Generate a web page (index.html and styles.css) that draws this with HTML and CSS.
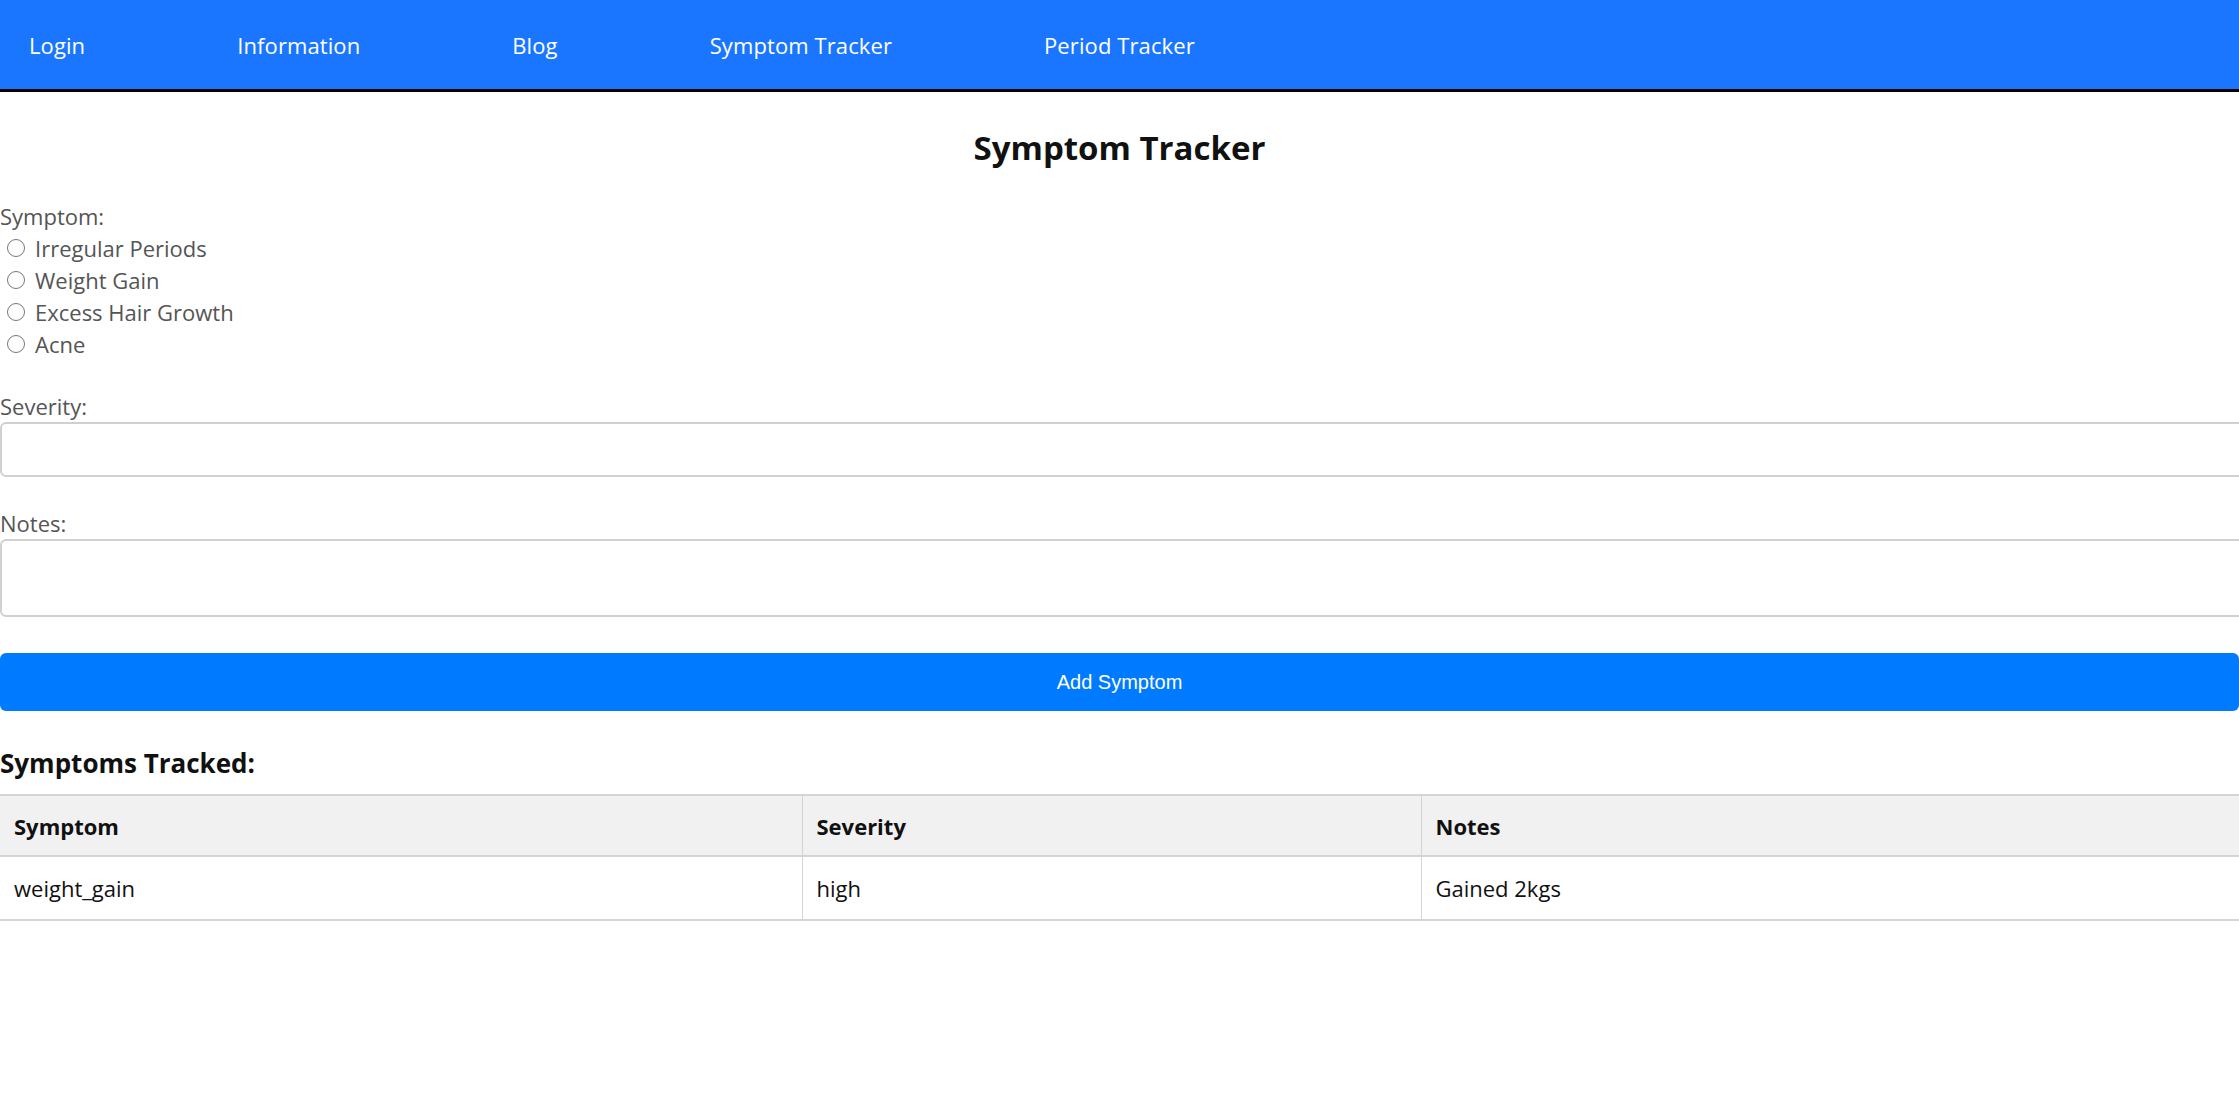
FILE: index.html
```html
<!DOCTYPE html>
<html lang="en">
<head>
<meta charset="utf-8">
<title>Symptom Tracker</title>
<link rel="stylesheet" href="styles.css">
</head>
<body>
<nav class="topnav">
  <ul class="nav-list">
    <li><a href="#">Login</a></li>
    <li><a href="#">Information</a></li>
    <li><a href="#">Blog</a></li>
    <li><a href="#">Symptom Tracker</a></li>
    <li><a href="#">Period Tracker</a></li>
  </ul>
</nav>
<main class="page">
  <h2 class="title">Symptom Tracker</h2>
  <form class="tracker-form">
    <div class="field-group">
      <span class="field-label">Symptom:</span>
      <label class="radio-row"><input type="radio" name="symptom" class="radio"> Irregular Periods</label>
      <label class="radio-row"><input type="radio" name="symptom" class="radio"> Weight Gain</label>
      <label class="radio-row"><input type="radio" name="symptom" class="radio"> Excess Hair Growth</label>
      <label class="radio-row"><input type="radio" name="symptom" class="radio"> Acne</label>
    </div>
    <div class="field-group">
      <label class="field-label" for="severity">Severity:</label>
      <input id="severity" type="text" class="text-input">
    </div>
    <div class="field-group field-group-last">
      <label class="field-label" for="notes">Notes:</label>
      <textarea id="notes" class="text-area"></textarea>
    </div>
    <button type="button" class="submit-btn">Add Symptom</button>
  </form>
  <h3 class="subtitle">Symptoms Tracked:</h3>
  <table class="data-table">
    <thead>
      <tr><th class="col-symptom">Symptom</th><th class="col-severity">Severity</th><th>Notes</th></tr>
    </thead>
    <tbody>
      <tr><td>weight_gain</td><td>high</td><td>Gained 2kgs</td></tr>
    </tbody>
  </table>
</main>
</body>
</html>
```

FILE: styles.css
```css
html, body {
  margin: 0;
  padding: 0;
}
body {
  overflow-x: hidden;
  background: #fff;
  font-family: "Open Sans", "Noto Sans", "Liberation Sans", sans-serif;
  font-size: 22px;
  color: #111;
}
.topnav {
  background: #1b76ff;
  height: 89px;
  border-bottom: 3px solid #000;
}
.nav-list {
  list-style: none;
  margin: 0;
  padding: 0 0 0 29px;
  height: 100%;
  display: flex;
  align-items: center;
  gap: 152px;
}
.nav-list a {
  color: #fff;
  text-decoration: none;
  font-size: 22px;
  letter-spacing: 0.1px;
}
.page {
  display: block;
}
.title {
  margin: 32px 0 29px;
  text-align: center;
  font-size: 33px;
  line-height: 48px;
  font-weight: 700;
  color: #111;
}
.tracker-form {
  display: flex;
  flex-direction: column;
}
.field-group {
  display: flex;
  flex-direction: column;
  margin-bottom: 31px;
}
.field-group-last {
  margin-bottom: 36px;
}
.field-label {
  display: block;
  color: #555;
  line-height: 31px;
}
.radio-row {
  display: flex;
  align-items: center;
  color: #555;
  line-height: 32px;
}
.radio {
  width: 18px;
  height: 18px;
  margin: 0 10px 0 7px;
}
.text-input, .text-area {
  display: block;
  box-sizing: border-box;
  width: calc(100% + 20px);
  border: 2px solid #d0d0d0;
  border-radius: 6px;
  font: inherit;
  background: #fff;
  margin: 0;
}
.text-input {
  height: 55px;
}
.text-area {
  height: 78px;
  resize: none;
}
.submit-btn {
  display: block;
  width: 100%;
  height: 58px;
  border: none;
  border-radius: 6px;
  background: #007bff;
  color: #fff;
  font-family: "Liberation Sans", Arial, sans-serif;
  font-size: 20px;
}
.subtitle {
  margin: 32px 0 11px;
  font-size: 26px;
  line-height: 40px;
  font-weight: 700;
  color: #111;
}
.data-table {
  width: 100%;
  border-collapse: collapse;
  table-layout: fixed;
}
.data-table th, .data-table td {
  box-sizing: border-box;
  border-top: 2px solid #d4d4d4;
  border-bottom: 2px solid #d4d4d4;
  border-left: 1px solid #d4d4d4;
  height: 61px;
  padding: 0 14px;
  text-align: left;
  color: #111;
  font-size: 22px;
}
.data-table td {
  height: 64px;
}
.data-table th:first-child, .data-table td:first-child {
  border-left: none;
}
.data-table th {
  background: #f1f1f1;
  font-weight: 700;
}
.col-symptom {
  width: 802px;
}
.col-severity {
  width: 619px;
}
```
